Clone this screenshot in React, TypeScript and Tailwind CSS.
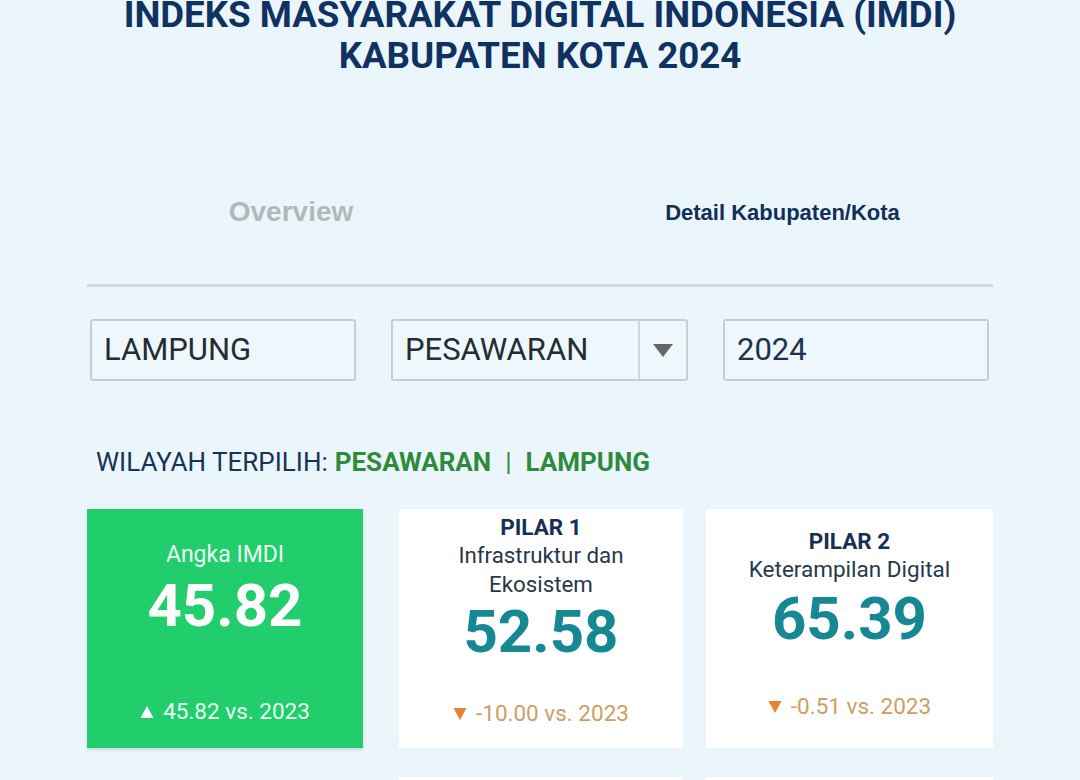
const font = { fontFamily: "Roboto, 'Noto Sans', sans-serif" };
const arial = { fontFamily: "'Liberation Sans', Arial, sans-serif" };

function Caret() {
    return (
        <svg width="20" height="13" viewBox="0 0 20 13" className="block">
            <path d="M0 0 H20 L10 13 Z" fill="#646769" />
        </svg>
    );
}

function Tri({ up, color }: { up?: boolean; color: string }) {
    return (
        <svg width="14" height="14" viewBox="0 0 14 14" className="inline-block mr-[9px] -mt-[3px] align-middle">
            <path d={up ? "M7 1 L13.5 13 H0.5 Z" : "M0.5 1 H13.5 L7 13 Z"} fill={color} />
        </svg>
    );
}

function Box({ children, className = "" }: { children: React.ReactNode; className?: string }) {
    return (
        <div className={`h-[62px] flex items-center border-2 border-[#c8cdd0] rounded-[3px] bg-[#eef7fc] ${className}`}>
            {children}
        </div>
    );
}

export default function App() {
    return (
        <div className="min-h-screen bg-[#ebf6fc] overflow-hidden" style={font}>
            <div className="w-[906px] ml-[87px]">
                {/* title */}
                <h1 className="-mt-[6px] text-center text-[36.7px] leading-[41px] font-bold text-[#0f3262] whitespace-nowrap">
                    INDEKS MASYARAKAT DIGITAL INDONESIA (IMDI)
                    <br />
                    KABUPATEN KOTA 2024
                </h1>

                {/* tabs */}
                <div className="mt-[120px] flex items-center h-[32px]" style={arial}>
                    <div className="w-[408px] text-center text-[28px] font-bold text-[#b3b7ba]">Overview</div>
                    <div className="ml-auto w-[421px] text-center text-[22px] font-bold text-[#10305a]">Detail Kabupaten/Kota</div>
                </div>
                <div className="mt-[56px] h-[3px] bg-[#d2d9dc]" />

                {/* filters */}
                <div className="mt-[32px] flex gap-[35px] pl-[3px]">
                    <Box className="w-[266px] px-[12px]">
                        <span className="text-[31px] text-[#262c33]">LAMPUNG</span>
                    </Box>
                    <Box className="w-[297px]">
                        <span className="flex-1 px-[12px] text-[31px] text-[#262c33]">PESAWARAN</span>
                        <div className="w-[48px] h-full border-l-2 border-[#d2d6d9] flex items-center justify-center">
                            <Caret />
                        </div>
                    </Box>
                    <Box className="w-[266px] px-[12px]">
                        <span className="text-[31px] text-[#1b3350]">2024</span>
                    </Box>
                </div>

                {/* selected region */}
                <div className="mt-[65px] pl-[9px] h-[32px] flex items-center text-[26px] text-[#173457]">
                    <span>WILAYAH TERPILIH:</span>
                    <span className="ml-[7px] font-bold text-[#2f8a3c]">PESAWARAN</span>
                    <span className="mx-[14px] text-[#2f8a3c]">|</span>
                    <span className="font-bold text-[#2f8a3c]">LAMPUNG</span>
                </div>

                {/* score cards */}
                <div className="mt-[31px] flex">
                    <div className="w-[276px] h-[239px] bg-[#22cd6c] shadow-[0_2px_3px_rgba(0,0,0,0.12)] flex flex-col items-center pt-[32px] text-[#ecfdf3]">
                        <div className="text-[23px] leading-[28px]">Angka IMDI</div>
                        <div className="mt-[7px] text-[60px] leading-[60px] font-bold text-white">45.82</div>
                        <div className="mt-[61px] text-[22.5px] leading-[28px] whitespace-nowrap">
                            <Tri up color="#ffffff" />
                            45.82 vs. 2023
                        </div>
                    </div>

                    <div className="ml-[36px] w-[284px] h-[239px] bg-white flex flex-col items-center pt-[4px]">
                        <div className="text-[22.5px] leading-[28px] font-bold text-[#172f54]">PILAR 1</div>
                        <div className="text-[22.3px] leading-[29px] text-[#27384b] text-center w-[200px]">Infrastruktur dan Ekosistem</div>
                        <div className="mt-[3px] text-[60px] leading-[60px] font-bold text-[#168893]">52.58</div>
                        <div className="mt-[37px] text-[22.5px] leading-[28px] text-[#cf9d63] whitespace-nowrap">
                            <Tri color="#e8832a" />
                            -10.00 vs. 2023
                        </div>
                    </div>

                    <div className="ml-[23px] w-[287px] h-[239px] bg-white flex flex-col items-center pt-[18px]">
                        <div className="text-[22.5px] leading-[28px] font-bold text-[#172f54]">PILAR 2</div>
                        <div className="text-[22.5px] leading-[29px] text-[#27384b]">Keterampilan Digital</div>
                        <div className="mt-[5px] text-[60px] leading-[60px] font-bold text-[#168893]">65.39</div>
                        <div className="mt-[43px] text-[22.5px] leading-[28px] text-[#cf9d63] whitespace-nowrap">
                            <Tri color="#e8832a" />
                            -0.51 vs. 2023
                        </div>
                    </div>
                </div>

                <div className="mt-[29px] flex">
                    <div className="w-[276px]" />
                    <div className="ml-[36px] w-[284px] h-[239px] bg-white" />
                    <div className="ml-[23px] w-[287px] h-[239px] bg-white" />
                </div>
            </div>
        </div>
    );
}
